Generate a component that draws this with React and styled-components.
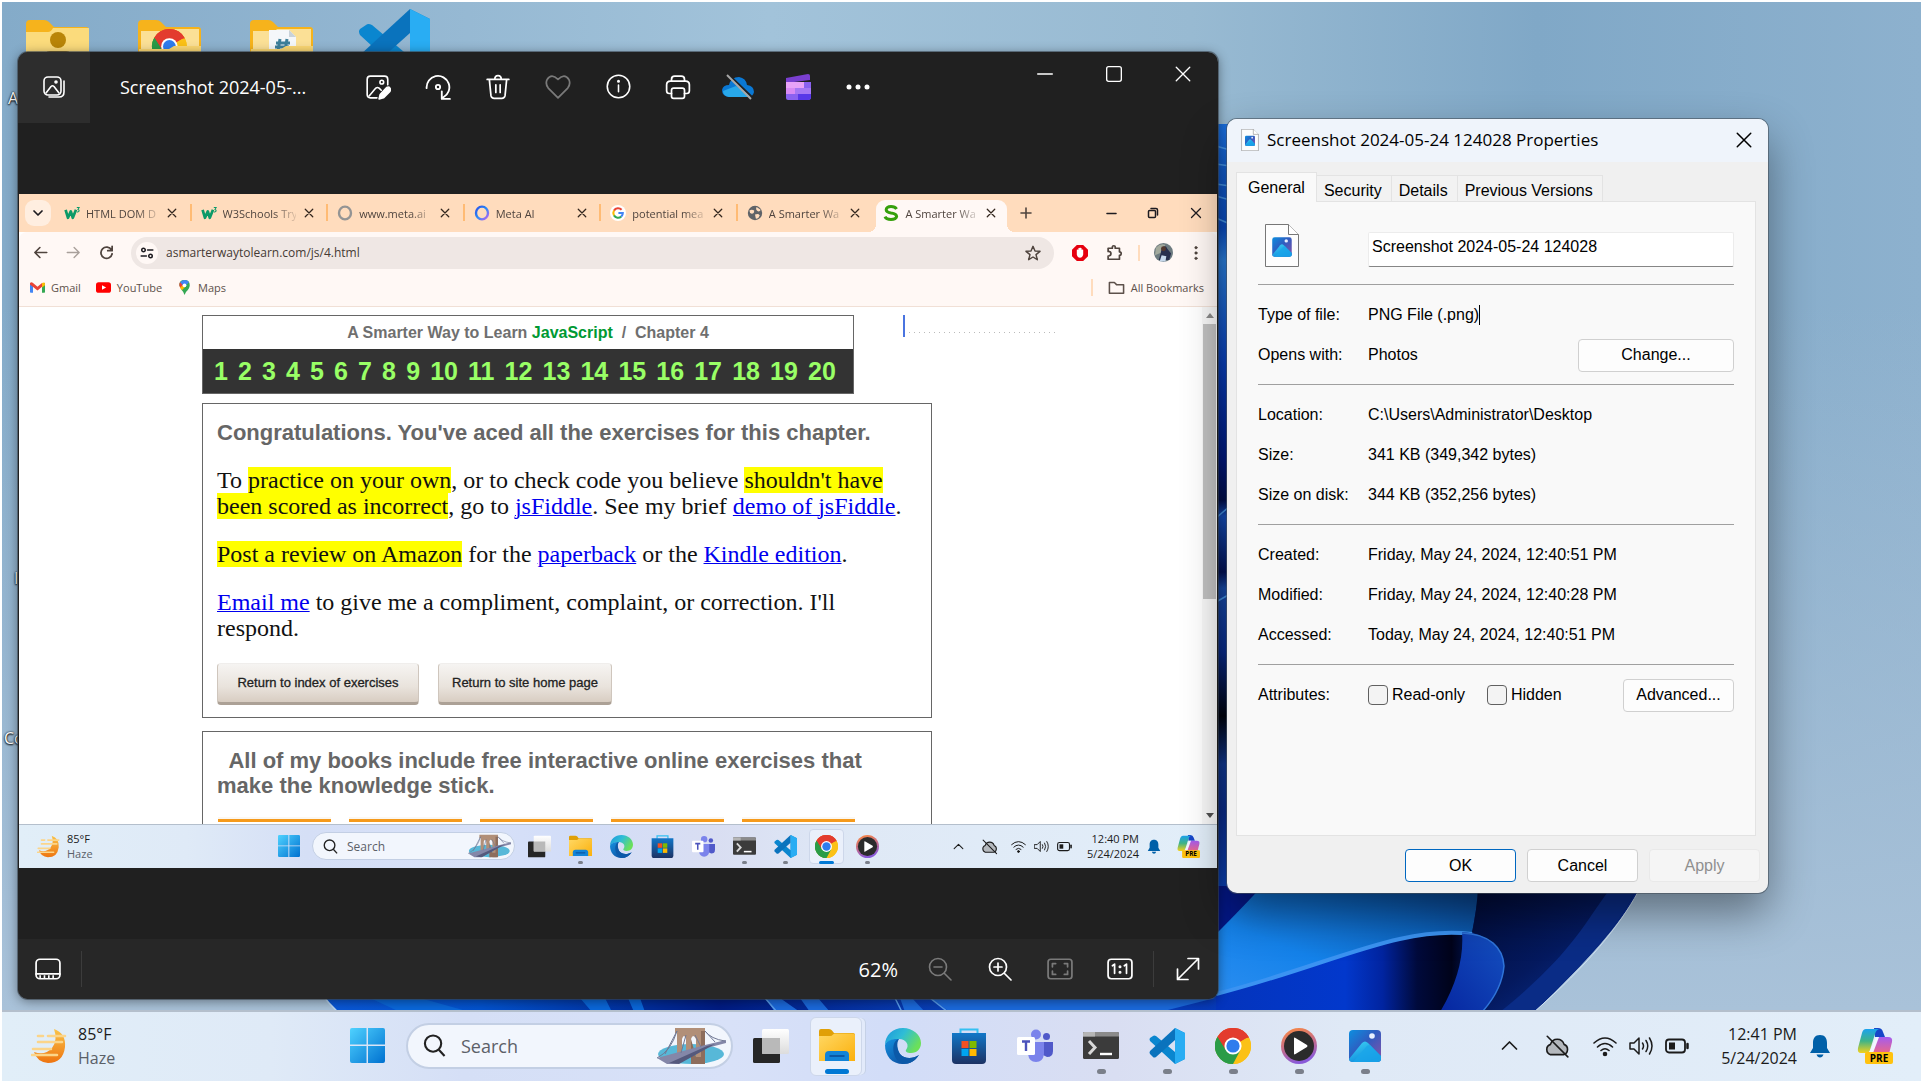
import React from "react";
import styled, { createGlobalStyle, css } from "styled-components";

const ui = '"Open Sans", "Noto Sans", sans-serif';
const arial = '"Liberation Sans", Arial, sans-serif';
const serif = '"Liberation Serif", Georgia, serif';

const GlobalStyle = createGlobalStyle`
  * { box-sizing: border-box; }
  body { margin: 0; background: #fff; font-family: ${ui}; }
  button, input { font: inherit; color: inherit; margin: 0; }
  button { cursor: pointer; }
`;

/* ---------- desktop ---------- */

const Desktop = styled.div`
  display: flex;
  flex-direction: column;
  height: 100vh;
  padding: 2px;
  overflow: hidden;
`;

const Workspace = styled.main`
  position: relative;
  flex: 1;
  min-height: 0;
  overflow: hidden;
  background: #93b4cd;
`;

const WallpaperSvg = styled.svg`
  position: absolute;
  inset: 0;
  width: 100%;
  height: 100%;
`;

const DesktopItem = styled.div`
  position: absolute;
  left: ${(p) => p.$x}px;
  top: ${(p) => p.$y}px;
  font-size: 16px;
  line-height: 20px;
  color: #fff;
  text-shadow: 0 1px 2px #000, 0 0 2px #000;
  svg { display: block; }
`;

/* ---------- shared parts ---------- */

const IconButton = styled.button`
  display: flex;
  align-items: center;
  justify-content: center;
  width: ${(p) => p.$w}px;
  height: ${(p) => (p.$h ? p.$h + "px" : "100%")};
  padding: 0;
  flex: none;
  border: 0;
  background: none;
  color: ${(p) => p.$color || "inherit"};
`;

const Line = ({ size = 24, w = 1.3, children, h }) => (
  <svg width={size} height={h || size} viewBox="0 0 24 24" fill="none" stroke="currentColor"
    strokeWidth={w} strokeLinecap="round" strokeLinejoin="round">{children}</svg>
);

/* ---------- photo viewer ---------- */

const PhotosWindow = styled.section`
  position: absolute;
  left: 16px;
  top: 50px;
  width: 1200px;
  display: flex;
  flex-direction: column;
  border-radius: 10px;
  overflow: hidden;
  background: #202020;
  color: #fff;
`;

const PhotosShadow = styled.div`
  position: absolute;
  left: 16px;
  top: 50px;
  width: 1200px;
  height: 947px;
  border-radius: 10px;
  box-shadow: 0 0 0 1px rgba(60, 70, 80, 0.6), 0 2px 12px rgba(0, 0, 0, 0.45);
`;

const PhotosBar = styled.header`
  display: flex;
  height: 71px;
`;

const GalleryCell = styled.div`
  display: flex;
  width: 72px;
  padding-bottom: 2px;
  background: #2d2d2d;
`;

const PhotosTitle = styled.h1`
  margin: 0;
  width: 258px;
  padding-left: 30px;
  font-size: 18px;
  font-weight: 400;
  line-height: 70px;
`;

const Commands = styled.div`
  display: flex;
  padding-bottom: 2px;
`;

const WindowControls = styled.div`
  display: flex;
  margin-left: auto;
  padding-right: 1px;
`;

const Stage = styled.div`
  padding: 71px 1px;
`;

const PhotosFooter = styled.footer`
  display: flex;
  align-items: center;
  height: 60px;
  background: #272727;
  font-size: 20px;
`;

const FooterRule = styled.span`
  width: 1px;
  height: 36px;
  margin: 0 4px 0 3px;
  background: #3c3c3c;
`;

const ZoomLevel = styled.output`
  margin-left: auto;
  padding-right: 12px;
`;

/* ---------- browser ---------- */

const Browser = styled.article`
  display: flex;
  flex-direction: column;
  background: #fff;
  color: #4f443e;
`;

const TabStrip = styled.div`
  display: flex;
  align-items: center;
  height: 38px;
  padding-left: 6px;
  background: #ffdcbd;
`;

const TabSearch = styled(IconButton)`
  border-radius: 9px;
  background: #ffeee0;
  color: #1d1b20;
  margin-right: 4px;
`;

const TabList = styled.div`
  display: grid;
  grid-template-columns: repeat(7, 1fr);
  flex: 1;
  height: 100%;
  padding-top: 6px;
`;

const Tab = styled.div`
  position: relative;
  display: flex;
  align-items: center;
  padding: 0 0 6px 9px;
  font-size: 11px;
  height: 32px;
  ${(p) => p.$rule && css`
    background: linear-gradient(#ffbb74, #ffbb74) right 0 top 4px / 2px 17px no-repeat;
  `}
  ${(p) => p.$active && css`
    margin: 0 4px 0 2px;
    padding-left: 7px;
    background: #fff8f5;
    border-radius: 9px 9px 0 0;
    &::before, &::after {
      content: "";
      position: absolute;
      bottom: 0;
      width: 8px;
      height: 8px;
    }
    &::before { left: -8px; background: radial-gradient(circle at 0 0, transparent 8px, #fff8f5 8px); }
    &::after { right: -8px; background: radial-gradient(circle at 100% 0, transparent 8px, #fff8f5 8px); }
  `}
`;

const TabLabel = styled.span`
  width: 73px;
  margin-left: 6px;
  white-space: nowrap;
  mask-image: linear-gradient(90deg, #000 70%, rgba(0, 0, 0, 0.15) 100%);
`;

const ChromeControls = styled.div`
  display: flex;
  height: 100%;
  margin-left: 49px;
`;

const Toolbar = styled.div`
  display: flex;
  align-items: center;
  height: 41px;
  padding: 0 6px 0 4px;
  background: #fff8f5;
  border-radius: 8px 8px 0 0;
`;

const Omnibox = styled.div`
  display: flex;
  align-items: center;
  flex: 1;
  height: 32px;
  margin: 0 8px;
  padding-left: 5px;
  border-radius: 16px;
  background: #efe7e4;
`;

const SiteInfo = styled(IconButton)`
  border-radius: 50%;
  background: #fff8f5;
  color: #1d1b20;
`;

const UrlInput = styled.input`
  flex: 1;
  padding: 0 0 0 8px;
  border: 0;
  background: none;
  font-size: 12px;
  outline: 0;
  color: #453a34;
`;

const BarRule = styled.span`
  width: 2px;
  height: 16px;
  margin: 0 6px;
  background: #ffdcbd;
`;

const Bookmarks = styled.nav`
  display: flex;
  align-items: center;
  height: 34px;
  padding: 0 13px 4px 11px;
  gap: 15px;
  font-size: 11px;
  background: #fff8f5;
  border-bottom: 1px solid #f1e0d6;
`;

const Bookmark = styled.a`
  display: flex;
  align-items: center;
  gap: 6px;
  color: #5d514b;
  text-decoration: none;
`;

const BookmarkRule = styled.span`
  width: 2px;
  height: 17px;
  margin-left: auto;
  background: #ffdcbd;
`;

const PageArea = styled.div`
  display: flex;
  height: 517px;
  overflow: hidden;
`;

const PageContent = styled.div`
  flex: 1;
  padding: 8px 0 0 183px;
  color: #111;
`;

const ScrollTrack = styled.div`
  display: flex;
  flex-direction: column;
  align-items: center;
  width: 15px;
  padding: 5px 1px;
  background: #f8f8f8;
`;

const ScrollThumb = styled.div`
  width: 100%;
  height: 275px;
  margin: 4px 0 auto;
  background: #c1c1c1;
`;

const ChapterRow = styled.div`
  display: flex;
  gap: 49px;
`;

const ChapterBox = styled.header`
  width: 652px;
  border: 1px solid #666;
`;

const ChapterTitle = styled.h2`
  margin: 0;
  font: 700 16px/33px ${arial};
  text-align: center;
  white-space: pre;
  color: #6f6f6f;
  em { font-style: normal; color: #009933; }
`;

const Numbers = styled.nav`
  display: flex;
  justify-content: space-between;
  padding: 0 17px 0 11px;
  background: #333;
  font: 700 25px/44px ${arial};
  a { color: #99ff66; text-decoration: none; }
`;

const StrayField = styled.div`
  width: 156px;
  height: 22px;
  border-left: 2px solid #4a74e0;
  background: linear-gradient(90deg, #bbb 25%, transparent 25%) 4px 17px / 5px 1px repeat-x;
`;

const Card = styled.section`
  width: 730px;
  margin-top: ${(p) => p.$gap}px;
  padding: 16px 14px 12px;
  border: 1px solid #666;
  font: 24px/26px ${serif};
`;

const CardTitle = styled.h3`
  margin: 0;
  font: 700 22px/25px ${arial};
  color: #666;
  white-space: pre-line;
`;

const Paragraph = styled.p`
  margin: 22px 0 0;
  white-space: pre;
  mark { background: #ff0; color: inherit; }
  a { color: #0000ee; text-decoration-thickness: 1px; }
`;

const ReturnRow = styled.div`
  display: flex;
  gap: 19px;
  margin-top: 22px;
`;

const ReturnButton = styled.button`
  width: ${(p) => p.$w}px;
  height: 42px;
  padding: 0;
  border: 1px solid #cfc6bd;
  border-top-color: #f0eeec;
  border-bottom: 3px solid #aca196;
  border-radius: 4px;
  background: linear-gradient(#f6f4f2, #e9e3dc 60%, #d8cdc2);
  font: 13px/18px ${arial};
  color: #222;
  -webkit-text-stroke: 0.3px #222;
`;

const Covers = styled.div`
  display: grid;
  grid-template-columns: repeat(5, 113px);
  gap: 18px;
  margin: 19px 0 0 1px;
  padding-bottom: 20px;
`;

const Cover = styled.div`
  height: 40px;
  background: linear-gradient(#fbf7f1 2px, #f59a1c 2px 5px, #fff 5px);
`;

/* ---------- task bar ---------- */

const Bar = styled.footer`
  display: flex;
  align-items: center;
  position: relative;
  flex: none;
  height: ${(p) => (p.$small ? 44 : 71)}px;
  padding-right: ${(p) => (p.$small ? 9 : 14)}px;
  background: linear-gradient(90deg, #e1eef8 0%, #dfeaf7 14%, #d5dff6 24%, #d8e1f8 38%, #d2ddf8 46%, #d9def2 58%, #dfe9f6 70%, #e2eef9 100%);
  box-shadow: inset 0 ${(p) => (p.$small ? 1 : 2)}px #b4bfcc;
  color: #1b1b1b;
`;

const Weather = styled.div`
  display: flex;
  align-items: center;
  gap: ${(p) => (p.$small ? 7 : 11)}px;
  width: ${(p) => (p.$small ? 247 : 329)}px;
  padding-left: ${(p) => (p.$small ? 18 : 29)}px;
  font-size: ${(p) => (p.$small ? 11 : 16)}px;
  line-height: ${(p) => (p.$small ? 15 : 24)}px;
  span { display: block; }
  span + span { color: #5a6068; }
`;

const Search = styled.label`
  display: flex;
  align-items: center;
  width: ${(p) => (p.$small ? 203 : 327)}px;
  height: ${(p) => (p.$small ? 28 : 46)}px;
  margin: 0 ${(p) => (p.$small ? "4px 0 0" : "5px 0 3px")};
  padding: 0 ${(p) => (p.$small ? "3px 0 10px" : "5px 0 15px")};
  border: ${(p) => (p.$small ? 1 : 2)}px solid #c3cfe4;
  border-radius: 24px;
  background: #f2f6fd;
  font-size: ${(p) => (p.$small ? 12 : 18)}px;
  svg { flex: none; }
`;

const SearchInput = styled.input`
  flex: 1;
  min-width: 0;
  padding: 0 0 0 ${(p) => (p.$small ? 9 : 15)}px;
  border: 0;
  outline: 0;
  background: none;
  &::placeholder { color: #5c6068; opacity: 1; }
`;

const AppButton = styled.button`
  position: relative;
  display: flex;
  align-items: center;
  justify-content: center;
  flex: none;
  width: ${(p) => (p.$small ? 41 : 66)}px;
  height: 100%;
  padding: 0;
  border: 0;
  background: none;
  &::before {
    content: "";
    position: absolute;
    inset: ${(p) => (p.$small ? "5px 3px 4px" : "7px 8px 5px 6px")};
    display: ${(p) => (p.$active ? "block" : "none")};
    border: 1px solid #cdd7ea;
    border-radius: ${(p) => (p.$small ? 4 : 6)}px;
    background: #eaf0fb;
    box-shadow: ${(p) => (p.$small ? "none" : "4px 0 0 -1px #e2eafa, 5px 0 0 -1px #c5d1e6")};
  }
  &::after {
    content: "";
    position: absolute;
    bottom: ${(p) => (p.$small ? 4 : 7)}px;
    display: ${(p) => (p.$active || p.$open ? "block" : "none")};
    width: ${(p) => (p.$active ? (p.$small ? 15 : 24) : p.$small ? 5 : 9)}px;
    height: ${(p) => (p.$small ? 3 : 5)}px;
    border-radius: 3px;
    background: ${(p) => (p.$active ? "#0078d4" : "#7a7f8a")};
  }
  svg { position: relative; }
`;

const Tray = styled.div`
  display: flex;
  align-items: center;
  height: 100%;
  margin-left: auto;
`;

const TrayOverflow = styled.div`
  display: flex;
  height: 100%;
  margin-right: ${(p) => (p.$small ? 2 : 6)}px;
`;

const Clock = styled.time`
  width: ${(p) => (p.$small ? 63 : 102)}px;
  font-size: ${(p) => (p.$small ? 11 : 16)}px;
  line-height: ${(p) => (p.$small ? 15 : 24)}px;
  text-align: right;
  white-space: nowrap;
  span { display: block; }
`;

/* ---------- properties dialog ---------- */

const Dialog = styled.section`
  position: absolute;
  left: 1225px;
  top: 117px;
  width: 541px;
  height: 774px;
  display: flex;
  flex-direction: column;
  border-radius: 10px;
  background: #f0f0f0;
  color: #000;
  font: 16px/20px ${arial};
  overflow: hidden;
`;

const DialogShadow = styled.div`
  position: absolute;
  left: 1225px;
  top: 117px;
  width: 541px;
  height: 774px;
  border-radius: 10px;
  box-shadow: 0 0 0 1px rgba(70, 80, 90, 0.6), 0 20px 44px rgba(0, 0, 0, 0.42);
`;

const DialogBar = styled.header`
  display: flex;
  align-items: center;
  gap: 8px;
  height: 43px;
  padding: 0 0 2px 14px;
  background: #eff4fb;
  font: 17px/24px ${ui};
`;

const DialogTitle = styled.h2`
  flex: 1;
  margin: 0;
  font: inherit;
`;

const DialogTabs = styled.div`
  display: flex;
  align-items: flex-end;
  padding: 10px 9px 0;
`;

const DialogTab = styled.button`
  height: ${(p) => (p.$active ? 30 : 26)}px;
  margin-bottom: ${(p) => (p.$active ? -1 : 0)}px;
  padding: ${(p) => (p.$active ? "0 11px" : "5px 9px 0 7px")};
  border: 1px solid #e3e3e3;
  border-left-width: ${(p) => (p.$active ? 1 : 0)}px;
  border-bottom: 0;
  background: ${(p) => (p.$active ? "#f9f9f9" : "#f2f2f2")};
  z-index: ${(p) => (p.$active ? 1 : 0)};
`;

const Panel = styled.div`
  flex: 1;
  margin: 0 12px 0 9px;
  padding: 0 21px;
  border: 1px solid #e3e3e3;
  background: #f9f9f9;
`;

const FileHead = styled.div`
  display: flex;
  padding: 22px 0 17px;
  svg { margin: 0 69px 0 7px; flex: none; }
`;

const NameInput = styled.input`
  flex: 1;
  min-width: 0;
  height: 35px;
  margin-top: 8px;
  padding: 0 3px 5px;
  border: 1px solid #ececec;
  border-bottom-color: #868686;
  border-radius: 2px;
  background: #fff;
`;

const Group = styled.dl`
  margin: 0;
  padding: 10px 0 9px;
  border-top: 1px solid #a0a0a0;
`;

const Row = styled.div`
  display: flex;
  align-items: center;
  height: 40px;
  dt { width: 110px; flex: none; }
  dd { display: flex; align-items: center; flex: 1; margin: 0; }
`;

const Caret = styled.i`
  width: 1px;
  height: 20px;
  background: #000;
`;

const PushButton = styled.button`
  width: ${(p) => p.$w || 111}px;
  height: 33px;
  margin-left: ${(p) => (p.$end ? "auto" : "0")};
  padding: 0;
  border: 1px solid ${(p) => (p.$primary ? "#0067c0" : "#d0d0d0")};
  border-radius: 4px;
  background: #fdfdfd;
  &:disabled { border-color: #e9e9e9; background: #f5f5f5; color: #8f8f8f; }
`;

const Check = styled.label`
  display: flex;
  align-items: center;
  gap: 4px;
  margin-right: 22px;
  input {
    appearance: none;
    width: 20px;
    height: 20px;
    border: 1px solid #606060;
    border-radius: 4px;
    background: #f3f3f3;
  }
`;

const DialogFooter = styled.footer`
  display: flex;
  justify-content: flex-end;
  gap: 11px;
  padding: 13px 8px 11px;
`;

/* ---------- drawings ---------- */

function Wallpaper() {
  return (
    <WallpaperSvg viewBox="2 2 1919 1008" preserveAspectRatio="xMidYMid slice" aria-hidden="true">
      <defs>
        <linearGradient id="sky" x1="0" x2="1">
          <stop offset="0" stopColor="#84abc9" /><stop offset=".15" stopColor="#8fb3cf" />
          <stop offset=".4" stopColor="#a2c3da" /><stop offset=".62" stopColor="#98bad2" />
          <stop offset=".8" stopColor="#80a8c7" /><stop offset="1" stopColor="#8db1ce" />
        </linearGradient>
        <linearGradient id="skyLow" x1="0" x2="0" y1="0" y2="1">
          <stop offset=".3" stopColor="#a9c0d6" stopOpacity="0" /><stop offset="1" stopColor="#a9c2d9" />
        </linearGradient>
        <linearGradient id="base" x1="0" x2="1">
          <stop offset="0" stopColor="#0a58d8" /><stop offset=".12" stopColor="#0353cf" />
          <stop offset=".3" stopColor="#001c84" /><stop offset=".5" stopColor="#0a47c4" />
          <stop offset=".7" stopColor="#0638b8" /><stop offset=".82" stopColor="#02124e" /><stop offset="1" stopColor="#0a2f96" />
        </linearGradient>
        <linearGradient id="gap" x1="0" x2="0" y1="0" y2="1">
          <stop offset="0" stopColor="#1a70e0" /><stop offset=".13" stopColor="#0b50cc" /><stop offset=".17" stopColor="#2d86ea" />
          <stop offset=".3" stopColor="#0a44c8" /><stop offset=".42" stopColor="#001a86" /><stop offset=".47" stopColor="#020f50" />
          <stop offset=".49" stopColor="#1753c4" /><stop offset=".56" stopColor="#04145c" /><stop offset=".58" stopColor="#1a50b4" />
          <stop offset=".66" stopColor="#0a2e94" /><stop offset=".74" stopColor="#01040f" /><stop offset=".8" stopColor="#123c9a" />
          <stop offset=".86" stopColor="#0c2f94" /><stop offset="1" stopColor="#0c4fd0" />
        </linearGradient>
        <linearGradient id="ribbon" x1="0" y1="1" x2="1" y2="0">
          <stop offset="0" stopColor="#2a8df0" /><stop offset=".35" stopColor="#1482ea" /><stop offset=".7" stopColor="#0c60b8" /><stop offset="1" stopColor="#0a3f86" />
        </linearGradient>
        <linearGradient id="under" x1="0" x2="1">
          <stop offset="0" stopColor="#0434bc" /><stop offset=".45" stopColor="#0238cc" /><stop offset=".58" stopColor="#0124a0" /><stop offset=".7" stopColor="#000a3c" /><stop offset=".82" stopColor="#00031a" /><stop offset="1" stopColor="#0632b0" />
        </linearGradient>
        <linearGradient id="right" x1="0" x2="1" y1="0" y2="1">
          <stop offset="0" stopColor="#010a34" /><stop offset=".5" stopColor="#04195e" /><stop offset="1" stopColor="#0b3aa6" />
        </linearGradient>
        <linearGradient id="fold" x1="0" x2="1" y1="1" y2="0"><stop offset="0" stopColor="#0626a0" /><stop offset="1" stopColor="#1450c0" /></linearGradient>
      </defs>
      <rect x="2" y="2" width="1919" height="1008" fill="url(#sky)" />
      <rect x="2" y="2" width="1919" height="1008" fill="url(#skyLow)" />
      <path d="M322 994 Q328 1003 338 1012 H1534 C1588 960 1620 925 1638 892 C1680 700 1600 200 1228 132 L1214 122 L900 160 Z" fill="url(#base)" />
      <path d="M370 998 L400 1012 H470 L420 998Z M580 998 L592 1012 H612 L605 998Z M628 998 L634 1012 H645 L640 998Z" fill="#0a68dc" />
      <path d="M765 998 L775 1012 H800 L780 998Z M800 998 L810 1012 H830 L818 998Z M900 998 L905 1012 H925 L912 998Z M930 998 L950 1012 H1160 L1215 998Z" fill="#1b6ade" />
      <path d="M765 998 L777 1012 M895 998 L902 1012 M930 998 L948 1012" stroke="#5aa0f0" strokeWidth="1.5" />
      <rect x="1216" y="124" width="14" height="800" fill="url(#gap)" />
      <path d="M1216 146 L1230 150 M1216 164 L1230 166 M1216 184 L1230 186 M1216 196 L1230 200 M1216 218 L1230 224 M1216 518 L1230 506 M1216 602 L1230 594" stroke="#4a9df2" strokeWidth="1.5" />
      <path d="M1216 930 Q1245 905 1262 886 H1480 Q1475 915 1472 934 C1400 925 1330 965 1216 994Z" fill="url(#ribbon)" />
      <path d="M1216 934 Q1245 905 1262 886 H1216Z" fill="#04188a" />
      <path d="M1216 994 C1330 965 1400 925 1472 934 L1500 950 Q1512 975 1480 1012 H1216Z" fill="url(#under)" />
      <path d="M1216 994 C1330 965 1400 925 1472 934" fill="none" stroke="#3b93f2" strokeWidth="4" />
      <path d="M1478 886 H1638 C1620 925 1588 960 1534 1012 H1484 C1512 960 1506 945 1472 932 Q1477 910 1478 886Z" fill="url(#right)" />
      <path d="M1612 886 H1638 C1620 925 1588 960 1534 1012 H1500 C1570 955 1580 930 1612 886Z" fill="#0a2c86" />
      <path d="M1462 932 C1490 934 1503 948 1504 966 Q1502 990 1482 1012 H1440 Q1465 970 1462 932Z" fill="url(#fold)" />
      <path d="M1462 933 C1490 934 1503 948 1504 966 Q1502 990 1482 1012" fill="none" stroke="#2f74d8" strokeWidth="1.5" />
      <path d="M1638 892 C1620 925 1588 965 1534 1012" fill="none" stroke="#cfe2f4" strokeWidth="1" />
      <path d="M322 994 Q328 1003 338 1012" fill="none" stroke="#bcd8f2" strokeWidth="1.5" />
    </WallpaperSvg>
  );
}

function DesktopFolder({ kind }) {
  return (
    <svg width="64" height="48" viewBox="0 0 64 48">
      <path d="M0 5 a4 4 0 0 1 4-4 h14 q3 0 5 2 l5 5 h32 a3 3 0 0 1 3 3 v40 H0z" fill="#f6b31c" />
      {kind === "user" ? (
        <>
          <path d="M0 13 h22 q3 0 5-4 h36 v42 H0z" fill="#fbdb7c" />
          <ellipse cx="32" cy="21" rx="8" ry="8" fill="#b98508" /><path d="M18 40 q0-8 6-8 h16 q6 0 6 8z" fill="#9a6a06" />
        </>
      ) : (
        <>
          <path d="M3 12 h20 q3 0 4-2 h34 v38 H3z" fill="#fbe096" />
          {kind === "chrome" ? (
            <g transform="translate(14 10) scale(1.45)"><ChromeMark /></g>
          ) : (
            <g><path d="M19 11 h20 l7 7 v26 H19z" fill="#f4f7fa" /><path d="M39 11 v7 h7z" fill="#c8d2da" />
              <path d="M30 20 l-2 12 M37 20 l-2 12 M26 24 h14 M25 28 h14" stroke="#3d7f9a" strokeWidth="3" /></g>
          )}
          <path d="M1 30 h30 l5-3 h27 v20 H1z" fill="#fbd773" />
        </>
      )}
    </svg>
  );
}

function ChromeMark() {
  return (
    <g>
      <circle cx="12" cy="12" r="12" fill="#fbc116" />
      <path d="M12 12 L1.6 6 A12 12 0 0 1 22.4 6z" fill="#e33b2e" />
      <path d="M12 12 L12 24 A12 12 0 0 1 1.6 6z" fill="#2a9c47" />
      <path d="M12 12 L22.4 6 A12 12 0 0 1 12 24z" fill="#fbc116" />
      <path d="M12 6.5 H22.7 A12 12 0 0 0 1.6 6 L7.2 15z" fill="#e33b2e" />
      <path d="M7 14.5 L1.6 6 A12 12 0 0 0 12 24 L16.8 15z" fill="#2a9c47" />
      <circle cx="12" cy="12" r="5.7" fill="#fff" />
      <circle cx="12" cy="12" r="4.4" fill="#2f7ced" />
    </g>
  );
}

const Art = ({ s, children, box = "0 0 36 36" }) => (
  <svg width={s} height={s} viewBox={box} aria-hidden="true">{children}</svg>
);

const VsMark = () => (
  <>
    <path d="M26 0 L36 5 V31 L26 36 L1 13 Q0 11 1 10 L4 8 Q5 7 7 8 L26 24z" fill="#0a86cf" />
    <path d="M26 0 L1 23 Q0 25 1 26 L4 29 Q5 30 7 29 L26 12z" fill="#0a73bd" />
    <path d="M26 0 L36 5 V31 L26 36z" fill="#29adf3" />
  </>
);

const art = {
  start: (
    <><defs><linearGradient id="wl" x2="1" y2="1"><stop stopColor="#4fd2ff" /><stop offset="1" stopColor="#0071d0" /></linearGradient></defs>
      <path d="M2 0 H17 V17 H0 V2 Q0 0 2 0z M18.500 0 H34 Q36 0 36 2 V17 H18.500z M0 18.500 H17 V36 H2 Q0 36 0 34z M18.500 18.500 H36 V34 Q36 36 34 36 H18.500z" fill="url(#wl)" /></>
  ),
  task: (
    <><defs><linearGradient id="tw" y2="1" x2="0"><stop stopColor="#fff" /><stop offset="1" stopColor="#dcdcdc" /></linearGradient></defs>
      <rect x="0" y="10" width="27" height="25" rx="1.500" fill="#262626" /><rect x="9" y="1" width="27" height="25" rx="1.500" fill="url(#tw)" />
      <path d="M9 10 H27 V26 H10 Q9 26 9 25z" fill="#b9b9b9" /></>
  ),
  folder: (
    <><defs><linearGradient id="fd" x2="1" y2="1"><stop stopColor="#ffd864" /><stop offset="1" stopColor="#fbb00c" /></linearGradient></defs>
      <path d="M0 3 Q0 1 2 1 H10 Q12 1 13 2.500 L15 5 H34 Q36 5 36 7 V12 H0z" fill="#e0a008" />
      <path d="M0 8 H11 Q13 8 14 6.500 L15.500 5.500 H34 Q36 5.500 36 7.500 V33 H0z" fill="url(#fd)" />
      <path d="M6 33 V27 Q6 23 10 23 H26 Q30 23 30 27 V33z" fill="#1284d8" /><path d="M10.500 28 H25.500" stroke="#0a4a94" strokeWidth="1.500" /></>
  ),
  edge: (
    <><defs><linearGradient id="eg" x1="0" y1="0" x2="1" y2=".5"><stop stopColor="#1c96dc" /><stop offset=".5" stopColor="#2fbdd6" /><stop offset="1" stopColor="#6be05a" /></linearGradient>
      <linearGradient id="eb" x2="1" y2="1"><stop stopColor="#1490df" /><stop offset="1" stopColor="#0b3f92" /></linearGradient></defs>
      <path d="M0 17 C0 7 8 0 18 0 C28 0 36 7 36 15 C36 21 32 25 26 25 C22 25 20 23.500 21 22 C25 17 21 11 14 11 C7 11 1 14 0 17z" fill="url(#eg)" />
      <path d="M0 17 C2 12 8 10.500 14 11 C10 13 12 22 15 26 C19 31 28 31 34 27 C30 33 25 36 18 36 C7 36 0 28 0 17z" fill="url(#eb)" />
      <path d="M14 11 C5 13 7 33 18 36 C25 36 30 33 34 27 C28 31 19 31 15 26 C12.500 22 11 15 14 11z" fill="#0c59a8" /></>
  ),
  store: (
    <><defs><linearGradient id="st" y2="1" x2="0"><stop stopColor="#1277c8" /><stop offset="1" stopColor="#1c3264" /></linearGradient></defs>
      <path d="M9.500 6 V1.500 H26.500 V6" fill="none" stroke="#35c0f2" strokeWidth="2" /><path d="M1 5 H35 V32 Q35 36 31 36 H5 Q1 36 1 32z" fill="url(#st)" />
      <path d="M10.500 13 h7 v7 h-7z" fill="#f25022" /><path d="M18.500 13 h7 v7 h-7z" fill="#7fba00" /><path d="M10.500 21 h7 v7 h-7z" fill="#00a4ef" /><path d="M18.500 21 h7 v7 h-7z" fill="#ffb900" /></>
  ),
  teams: (
    <><circle cx="19" cy="6.500" r="5" fill="#7b83eb" /><circle cx="29.500" cy="8.500" r="3.500" fill="#5059c9" />
      <path d="M26 14 H36 V23 Q36 29 30 29 L26 27z" fill="#5059c9" /><path d="M11 14 H27 V26 Q26 34 19 34 Q12 34 11 26z" fill="#7b83eb" />
      <rect x="0" y="9" width="18" height="18" rx="1.500" fill="#fff" /><path d="M5 13.500 H13 M9 13.500 V23" stroke="#4b53bc" strokeWidth="2.400" /></>
  ),
  terminal: (
    <><rect y="4" width="36" height="27" rx="1.500" fill="#3b3b3b" /><path d="M0 8.500 V5.500 Q0 4 1.500 4 H34.500 Q36 4 36 5.500 V8.500z" fill="#8b8b8b" /><path d="M0 8.500 V5.500 Q0 4 1.500 4 H12 V8.500z" fill="#b5b5b5" />
      <path d="M6 13 L12 19.500 L6 26" fill="none" stroke="#d8d8d8" strokeWidth="3" /><path d="M17 26 H29" stroke="#fff" strokeWidth="2.400" /></>
  ),
  vscode: <VsMark />,
  chrome: <g transform="scale(1.500)"><ChromeMark /></g>,
  player: (
    <><defs><linearGradient id="pl" y2="1" x2=".3"><stop stopColor="#ff8a3a" /><stop offset=".6" stopColor="#c06a90" /><stop offset="1" stopColor="#8a5ad8" /></linearGradient></defs>
      <circle cx="18" cy="18" r="18" fill="url(#pl)" /><circle cx="18" cy="18" r="15" fill="#2b2b2b" /><path d="M13 10.500 Q13 9 14.500 10 L26 17 Q27 18 26 19 L14.500 26 Q13 27 13 25.500z" fill="#fff" /></>
  ),
  photos: (
    <><defs><linearGradient id="ph" x2="1" y2="1"><stop stopColor="#0c8fe0" /><stop offset=".45" stopColor="#2f5cc0" /><stop offset="1" stopColor="#8a52a8" /></linearGradient>
      <linearGradient id="pm" x2=".6" y2="1"><stop stopColor="#3fd5f5" /><stop offset="1" stopColor="#0c86dc" /></linearGradient></defs>
      <rect x="2" y="2" width="32" height="32" rx="4" fill="url(#ph)" /><circle cx="25" cy="8" r="2.800" fill="#e8f0ff" />
      <path d="M2 31 L15 15 Q18 12 21 15 L34 28 V31 Q34 34 30 34 H6 Q2 34 2 31z" fill="url(#pm)" /><path d="M6 34 L19 19 Q20 17 23 17 L34 28 V31 Q34 34 30 34z" fill="#1aa6ea" opacity=".8" /></>
  ),
  haze: (
    <><defs><linearGradient id="hz" y2="1" x2="0"><stop stopColor="#f9c44a" /><stop offset="1" stopColor="#ee7410" /></linearGradient></defs>
      <path d="M23 1 Q35 5 34 19 Q32 35 17 35 Q6 34 3 24 Q14 28 21 20 Q27 12 23 1z" fill="url(#hz)" />
      <path d="M7 8 H12 M17 8 H34 M7 14 H31 M2 21 H20 M1 27 H26" stroke="#fbd58a" strokeWidth="2.600" strokeLinecap="round" /></>
  ),
  copilot: (
    <><defs><linearGradient id="ca" y2="1" x2="0"><stop stopColor="#1aa2ee" /><stop offset=".5" stopColor="#3fb488" /><stop offset="1" stopColor="#f5d21a" /></linearGradient>
      <linearGradient id="cb" y2="1" x2="0"><stop stopColor="#a45cf0" /><stop offset="1" stopColor="#fb6a70" /></linearGradient></defs>
      <path d="M17 0 H21 Q25 0 26 4 L28 9 H18z" fill="#1746c8" /><path d="M9 1 H22 Q19 2 18 6 L13 22 Q12 25 9 25 H4 Q0 25 1 20 L5 5 Q6 1 9 1z" fill="url(#ca)" />
      <path d="M22 9 H31 Q36 9 35 14 L32 26 Q31 29 27 29 H11 Q15 28 16 24 L19 12 Q20 9 22 9z" fill="url(#cb)" />
      <path d="M19 9 H22 L16 25 H12z" fill="#f2f6ff" /><rect x="8" y="24" width="28" height="12" rx="2" fill="#ffc20e" />
      <text x="22" y="33.500" textAnchor="middle" fontFamily="Open Sans" fontWeight="700" fontSize="10">PRE</text></>
  ),
};

function Bridge({ small }) {
  return (
    <svg width={small ? 44 : 71} height={small ? 24 : 38} viewBox="0 0 71 38" aria-hidden="true">
      <ellipse cx="36" cy="27" rx="33" ry="10" fill="#57b8d8" />
      <path d="M20 1 H50 V6 H48 V37 H41 V12 Q38 6 36 12 V30 H31 V12 Q29 6 27 12 V26 H22 V6 H20z" fill="#b18f78" />
      <path d="M36 12 V37 H50 V4 H46 V30 H41z" fill="#8d6d5c" />
      <path d="M2 31 L50 18 L71 13 V16 L52 21 L22 37 H12z" fill="#8487a8" /><path d="M14 36 L52 19 L60 17 L24 37z" fill="#55597c" />
      <path d="M22 4 Q16 24 2 31 M22 4 L10 27 M50 4 Q56 12 70 14 M50 4 L60 15 M31 8 L26 26 M40 8 L46 20" stroke="#707894" fill="none" strokeWidth="1" />
    </svg>
  );
}

const SearchGlass = ({ s }) => (
  <svg width={s} height={s} viewBox="0 0 24 24" fill="none" stroke="#222" strokeWidth="2.200"><circle cx="10.500" cy="10" r="8.500" /><path d="M16.500 16.500 L22.500 23" /></svg>
);

const FileIcon = ({ w, h }) => (
  <svg width={w} height={h} viewBox="0 0 34 43" aria-hidden="true">
    <path d="M.5 .5 H23.500 L33.500 10.500 V42.500 H.5z" fill="#fdfdfd" stroke="#777" /><path d="M23.500 .5 V10.500 H33.500" fill="#fff" stroke="#777" />
    <g transform="translate(6 12) scale(.61)">{art.photos}</g>
  </svg>
);

/* ---------- task bar ---------- */

const outerApps = [
  ["Task View", "task"], ["File Explorer", "folder", "active"], ["Edge", "edge"], ["Store", "store"], ["Teams", "teams"],
  ["Terminal", "terminal", "open"], ["VS Code", "vscode", "open"], ["Chrome", "chrome", "open"], ["Media Player", "player", "open"], ["Photos", "photos", "open"],
];
const innerApps = [
  ["Task View", "task"], ["File Explorer", "folder", "open"], ["Edge", "edge"], ["Store", "store"], ["Teams", "teams"],
  ["Terminal", "terminal", "open"], ["VS Code", "vscode", "open"], ["Chrome", "chrome", "active"], ["Media Player", "player", "open"],
];

function Taskbar({ small, apps, time }) {
  const icon = small ? 23 : 36;
  const tray = small ? 15 : 24;
  const cell = small ? 23 : 36;
  const wide = small ? 31 : 48;
  return (
    <Bar $small={small}>
      <Weather $small={small}>
        <Art s={icon}>{art.haze}</Art>
        <div><span>85°F</span><span>Haze</span></div>
      </Weather>
      <IconButton $w={small ? 46 : 72} aria-label="Start"><Art s={small ? 22 : 35}>{art.start}</Art></IconButton>
      <Search $small={small}>
        <SearchGlass s={small ? 15 : 23} />
        <SearchInput $small={small} placeholder="Search" aria-label="Search" />
        <Bridge small={small} />
      </Search>
      {apps.map(([name, key, state]) => (
        <AppButton key={name} aria-label={name} $small={small} $active={state === "active"} $open={state === "open"}>
          <Art s={icon}>{art[key]}</Art>
        </AppButton>
      ))}
      <Tray>
        <TrayOverflow $small={small}>
          <IconButton $w={wide} aria-label="Show hidden icons"><Line size={small ? 13 : 21} w={2}><path d="M4 16 L12 8 L20 16" /></Line></IconButton>
          <IconButton $w={wide} aria-label="OneDrive">
            <Line size={small ? 17 : 26} w={1.5}><path d="M6 20 A5 5 0 0 1 6 10.500 A6.500 6.500 0 0 1 18.500 10.500 A5 5 0 0 1 18 20z" fill="#b4b8bd" /><path d="M3 3 L22 22" /></Line>
          </IconButton>
        </TrayOverflow>
        <IconButton $w={cell} aria-label="Network">
          <Line size={tray} w={1.6}><path d="M1 9 Q12 -1 23 9 M4.500 13 Q12 6 19.500 13 M8 16.500 Q12 13 16 16.500" /><circle cx="12" cy="20" r="1.500" fill="currentColor" /></Line>
        </IconButton>
        <IconButton $w={cell} aria-label="Volume"><Line size={tray} w={1.5}><path d="M1 9 H5 L10 4 V20 L5 15 H1z M13.500 9 Q15.500 12 13.500 15 M17 6.500 Q20.500 12 17 17.500 M20.500 4 Q25.500 12 20.500 20" /></Line></IconButton>
        <IconButton $w={cell} aria-label="Battery"><Line size={tray} w={1.8}><rect x="1" y="5.500" width="19" height="13" rx="3" /><path d="M22.500 10 V14" strokeWidth="2.500" /><rect x="4" y="8.500" width="6" height="7" fill="currentColor" stroke="none" /></Line></IconButton>
        <Clock $small={small}><span>{time}</span><span>5/24/2024</span></Clock>
        <IconButton $w={small ? 29 : 46} $color="#0060a8" aria-label="Notifications">
          <svg width={small ? 14 : 22} height={small ? 15 : 24} viewBox="0 0 22 24" fill="currentColor"><path d="M11 1 C6 1 4 4.500 4 9 L4 14 L1 19 H21 L18 14 V9 C18 4.500 16 1 11 1z M7.500 20.500 H14.500 Q13.500 23.500 11 23.500 Q8.500 23.500 7.500 20.500z" /></svg>
        </IconButton>
        <IconButton $w={small ? 40 : 64} aria-label="Copilot"><Art s={icon}>{art.copilot}</Art></IconButton>
      </Tray>
    </Bar>
  );
}

/* ---------- browser ---------- */

const W3 = <><path d="M2 6 L5 16 L8.500 8 L11 16 L15 6" fill="none" stroke="#0c9a68" strokeWidth="3.400" strokeLinejoin="round" /><path d="M16 3 H19 L17.500 5.500 Q19.500 6 18.500 8 L16.500 9" fill="none" stroke="#0c9a68" strokeWidth="1.300" /></>;
const GIcon = <><circle cx="10" cy="10" r="10" fill="#fff" /><g fill="none" strokeWidth="2.600"><path d="M14.500 6 A6 6 0 0 0 5 7" stroke="#ea4335" /><path d="M5 7 A6 6 0 0 0 5 13" stroke="#fbbc05" /><path d="M5 13 A6 6 0 0 0 14 14.500" stroke="#34a853" /><path d="M14 14.500 A6 6 0 0 0 16 10 H10.500" stroke="#4285f4" /></g></>;

const tabs = [
  ["HTML DOM D", W3],
  ["W3Schools Try", W3],
  ["www.meta.ai", <ellipse cx="10" cy="10" rx="7.500" ry="8" fill="none" stroke="#949494" strokeWidth="3" />],
  ["Meta AI", <><defs><linearGradient id="mt" x2="1" y2="1"><stop stopColor="#2a50e8" /><stop offset=".5" stopColor="#2a8cf8" /><stop offset="1" stopColor="#c060f0" /></linearGradient></defs><ellipse cx="10" cy="10" rx="7.500" ry="8" fill="none" stroke="url(#mt)" strokeWidth="3" /></>],
  ["potential mea", GIcon],
  ["A Smarter Wa", <><circle cx="10" cy="10" r="9" fill="#5f6368" /><path d="M3 7 Q6 5 9 7 Q9 11 6 11 Q3 10 3 7z M12 2.500 Q10 6 14 8 Q17 8 17 6z M10 12 Q14 10 16 13 Q14 18 11 17z" fill="#ffdcbd" /></>],
  ["A Smarter Wa", <path d="M17 5 Q15 2 10 2 Q4 2 4 6 Q4 9 10 10 Q17 11 17 14.500 Q16 18 10 18 Q4 18 2.500 14.500" fill="none" stroke="#35a00c" strokeWidth="3.800" />],
];

const CloseX = ({ s = 10, w = 3 }) => <Line size={s} w={w}><path d="M3 3 L21 21 M21 3 L3 21" /></Line>;

function BrowserShot() {
  return (
    <Browser>
      <TabStrip>
        <TabSearch $w={26} $h={26} aria-label="Search tabs"><Line size={12} w={3.5}><path d="M4 8 L12 16 L20 8" /></Line></TabSearch>
        <TabList>
          {tabs.map(([label, icon], i) => (
            <Tab key={i} $active={i === 6} $rule={i < 5}>
              <Art s={16} box="0 0 20 20">{icon}</Art>
              <TabLabel>{label}</TabLabel>
              <IconButton $w={26} $color="#33261e" aria-label="Close tab"><CloseX /></IconButton>
            </Tab>
          ))}
        </TabList>
        <IconButton $w={30} aria-label="New tab"><Line size={12} w={3.2}><path d="M12 2 V22 M2 12 H22" /></Line></IconButton>
        <ChromeControls>
          <IconButton $w={42} $color="#1d1b20" aria-label="Minimize"><Line size={11} w={3}><path d="M2 12 H22" /></Line></IconButton>
          <IconButton $w={42} $color="#1d1b20" aria-label="Restore"><Line size={12} w={3}><rect x="3" y="7" width="14" height="14" rx="2" /><path d="M8 3 H18 Q21 3 21 6 V16" /></Line></IconButton>
          <IconButton $w={43} $color="#1d1b20" aria-label="Close"><CloseX s={12} w={2.6} /></IconButton>
        </ChromeControls>
      </TabStrip>
      <Toolbar>
        <IconButton $w={34} aria-label="Back"><Line size={15} w={2.6}><path d="M22 12 H4 M11 4 L3 12 L11 20" /></Line></IconButton>
        <IconButton $w={33} $color="#a9a09b" aria-label="Forward"><Line size={15} w={2.2}><path d="M2 12 H20 M13 4 L21 12 L13 20" /></Line></IconButton>
        <IconButton $w={33} aria-label="Reload"><Line size={15} w={2.8}><path d="M20 8 A9 9 0 1 0 21 14 M21 2 V9 H14" /></Line></IconButton>
        <Omnibox>
          <SiteInfo $w={22} $h={22} aria-label="Site information"><Line size={14} w={2.6}><circle cx="6" cy="7" r="3" /><path d="M13 7 H22 M2 17 H11" /><circle cx="18" cy="17" r="3" /></Line></SiteInfo>
          <UrlInput aria-label="Address" defaultValue="asmarterwaytolearn.com/js/4.html" />
          <IconButton $w={42} aria-label="Bookmark this page"><Line size={16} w={2.2}><path d="M12 2 L15 9 L22.500 9.500 L16.500 14.500 L18.500 22 L12 18 L5.500 22 L7.500 14.500 L1.500 9.500 L9 9z" /></Line></IconButton>
        </Omnibox>
        <IconButton $w={35} aria-label="Ad blocker">
          <Art s={16} box="0 0 20 20"><path d="M6 0 H14 L20 6 V14 L14 20 H6 L0 14 V6z" fill="#e6000f" /><path d="M6 10 V6 Q7 5 8 6 V4 Q9 3 10 4 V3.500 Q11 3 12 4 V6 Q13 5 14 6 V12 Q13 16 10 16 Q7 16 6 12z" fill="#fff" /></Art>
        </IconButton>
        <IconButton $w={35} aria-label="Extensions"><Line size={17} w={2.4}><path d="M3 6 H9 V4 Q9 2.500 11 2.500 Q13 2.500 13 4 V6 H19 V11 Q21.500 11 21.500 13.500 Q21.500 16 19 16 V21.500 H3 V17 Q7 17 7 13.500 Q7 10.500 3 10.500z" /></Line></IconButton>
        <BarRule />
        <IconButton $w={35} aria-label="Profile">
          <Art s={19} box="0 0 20 20"><circle cx="10" cy="10" r="10" fill="#6d7b80" /><path d="M2 5 Q7 0 12 2 L8 10 L1 13z" fill="#a3aa9d" /><path d="M8 6 Q12 1 14 6 L18 11 L16 18 H5 L7 11z" fill="#28304e" /><circle cx="10" cy="6" r="2.600" fill="#54382e" /><path d="M8 13 L13 14 L12 19.500 H6z" fill="#c7d9ec" /></Art>
        </IconButton>
        <IconButton $w={30} aria-label="Menu"><Line size={16} w={1}><g fill="currentColor"><circle cx="12" cy="4" r="1.800" /><circle cx="12" cy="12" r="1.800" /><circle cx="12" cy="20" r="1.800" /></g></Line></IconButton>
      </Toolbar>
      <Bookmarks>
        <Bookmark href="#gmail"><Art s={15} box="0 0 20 20"><path d="M0 4 H4 V17 H1 Q0 17 0 16z" fill="#4285f4" /><path d="M16 4 H20 V16 Q20 17 19 17 H16z" fill="#34a853" /><path d="M0 4 Q2 2 4 4 L10 9 L16 4 V9 L10 14 L0 6z" fill="#ea4335" /><path d="M16 4 Q20 2 20 5 V7 L16 10z" fill="#fbbc05" /></Art>Gmail</Bookmark>
        <Bookmark href="#youtube"><Art s={15} box="0 0 20 20"><rect y="3" width="20" height="14" rx="3.500" fill="#f00" /><path d="M8 7 L13.500 10 L8 13z" fill="#fff" /></Art>YouTube</Bookmark>
        <Bookmark href="#maps"><Art s={15} box="0 0 20 20"><path d="M10 0 Q17 0 17 7 Q17 11 12 16 L10 20 Q9 16 6 13 L3 7 Q3 0 10 0z" fill="#34a853" /><path d="M4 4 Q6 0 10 0 Q14 0 16 3 L8 11z" fill="#4285f4" /><path d="M4 3 L8 7 L4.500 11 Q2 6 4 3z" fill="#ea4335" /><path d="M4 10 L8 7 L12 8 L6.500 13.500z" fill="#fbbc05" /><circle cx="10" cy="7" r="2.500" fill="#fff" /></Art>Maps</Bookmark>
        <BookmarkRule />
        <Bookmark href="#all"><Line size={17} w={2.2}><path d="M2 5 H9 L12 8 H22 V20 H2z" /></Line>All Bookmarks</Bookmark>
      </Bookmarks>
      <PageArea>
        <PageContent>
          <ChapterRow>
            <ChapterBox>
              <ChapterTitle>A Smarter Way to Learn <em>JavaScript</em>{"  /  Chapter 4"}</ChapterTitle>
              <Numbers>{Array.from({ length: 20 }, (_, i) => <a key={i} href={"#" + (i + 1)}>{i + 1}</a>)}</Numbers>
            </ChapterBox>
            <StrayField />
          </ChapterRow>
          <Card $gap={9}>
            <CardTitle>Congratulations. You've aced all the exercises for this chapter.</CardTitle>
            <Paragraph>To <mark>practice on your own</mark>, or to check code you believe <mark>shouldn't have{"\n"}been scored as incorrect</mark>, go to <a href="#fiddle">jsFiddle</a>. See my brief <a href="#demo">demo of jsFiddle</a>.</Paragraph>
            <Paragraph><mark>Post a review on Amazon</mark> for the <a href="#paper">paperback</a> or the <a href="#kindle">Kindle edition</a>.</Paragraph>
            <Paragraph><a href="#email">Email me</a> to give me a compliment, complaint, or correction. I'll{"\n"}respond.</Paragraph>
            <ReturnRow>
              <ReturnButton $w={202}>Return to index of exercises</ReturnButton>
              <ReturnButton $w={174}>Return to site home page</ReturnButton>
            </ReturnRow>
          </Card>
          <Card $gap={13}>
            <CardTitle>{"\u00a0 All of my books include free interactive online exercises that\nmake the knowledge stick."}</CardTitle>
            <Covers>{[1, 2, 3, 4, 5].map((n) => <Cover key={n} />)}</Covers>
          </Card>
        </PageContent>
        <ScrollTrack>
          <svg width="8" height="8" viewBox="0 0 8 8"><path d="M0 6 L4 1 L8 6z" fill="#8a8a8a" /></svg>
          <ScrollThumb />
          <svg width="8" height="8" viewBox="0 0 8 8"><path d="M0 2 L4 7 L8 2z" fill="#505050" /></svg>
        </ScrollTrack>
      </PageArea>
      <Taskbar small apps={innerApps} time="12:40 PM" />
    </Browser>
  );
}

/* ---------- windows ---------- */

function Photos() {
  return (
    <>
      <PhotosShadow />
      <PhotosWindow>
        <PhotosBar>
          <GalleryCell><IconButton $w={72} aria-label="Gallery"><Line w={1.6}><rect x="2" y="2" width="17" height="18" rx="4" /><path d="M4 18 L9 11.500 Q10.500 10 12 11.500 L17 18 M22 6 V17 Q22 22 17 22 H7" /><circle cx="14" cy="7" r="1" /></Line></IconButton></GalleryCell>
          <PhotosTitle>Screenshot 2024-05-...</PhotosTitle>
          <Commands>
            <IconButton $w={60} aria-label="Edit image"><Line size={26} w={1.5}><path d="M11 22 H5 Q2 22 2 19 V5 Q2 2 5 2 H18 Q21 2 21 5 V10" /><path d="M4 20 L10 13 Q11.500 12 13 13 L15 15" /><circle cx="15.500" cy="7.500" r="1.700" /><path d="M13 23 L14 19 L20 12.500 Q22 11.500 23 13 Q24 14.500 23 16 L17 22z" fill="#fff" /></Line></IconButton>
            <IconButton $w={60} aria-label="Rotate"><Line size={26} w={1.7}><path d="M1.500 13 A10.500 10.500 0 1 1 17 21.500 M23 23 H15.500 V16" /><circle cx="12" cy="12" r="2" /></Line></IconButton>
            <IconButton $w={60} aria-label="Delete"><Line size={26} w={1.6}><path d="M2 5 H22 M9 5 Q9 1.500 12 1.500 Q15 1.500 15 5 M4 5 L5.500 20 Q6 22.500 8.500 22.500 H15.500 Q18 22.500 18.500 20 L20 5 M10 10 V17 M14 10 V17" /></Line></IconButton>
            <IconButton $w={60} $color="#7a7a7a" aria-label="Favorite"><Line size={26} w={1.6}><path d="M12 22 L3 13 Q0 9 2 5 Q6 -1 12 5 Q18 -1 22 5 Q24 9 21 13z" /></Line></IconButton>
            <IconButton $w={60} aria-label="Info"><Line size={25} w={1.5}><circle cx="12" cy="12" r="10.800" /><path d="M12 10.500 V17" /><circle cx="12" cy="7" r=".7" fill="#fff" /></Line></IconButton>
            <IconButton $w={60} aria-label="Print"><Line size={26} w={1.6}><path d="M6 6 V5 Q6 2 9 2 H15 Q18 2 18 5 V6 M6 18 H4 Q1.500 18 1.500 15.500 V10 Q1.500 6.500 5 6.500 H19 Q22.500 6.500 22.500 10 V15.500 Q22.500 18 20 18 H18" /><rect x="6" y="13" width="12" height="9.500" rx="2" /></Line></IconButton>
            <IconButton $w={60} aria-label="OneDrive">
              <svg width="32" height="26" viewBox="0 0 32 26"><path d="M7 23 Q0 22 0 16 Q1 11 7 11 Q9 3 17 3 Q24 4 25 11 Q32 12 32 18 Q31 23 26 23z" fill="#0a78d4" /><path d="M7 23 Q1 22 1 17 L14 12 L29 22 Q28 23 26 23z" fill="#28a8ea" /><path d="M7 1 L31 24" stroke="#202020" strokeWidth="2" /><path d="M5 1 L29 25" stroke="#a8a8a8" strokeWidth="2" /></svg>
            </IconButton>
            <IconButton $w={60} aria-label="Clipchamp">
              <svg width="25" height="26" viewBox="0 0 25 26"><path d="M0 4 L22 0 Q24 0 24 2 V6 L0 9z" fill="#7a3fd0" /><path d="M0 8 H25 V23 Q25 26 22 26 H2 Q0 26 0 24z" fill="#8a62f0" /><path d="M0 8 H18 V14 H0z" fill="#e8a2f8" /><path d="M0 14 H9 V20 H0z" fill="#d88af4" /><path d="M9 14 H25 V20 H9z" fill="#a678f4" /><path d="M12 20 H25 V23 Q25 26 22 26 H12z" fill="#5838e8" /></svg>
            </IconButton>
            <IconButton $w={60} aria-label="More"><svg width="24" height="6" viewBox="0 0 24 6" fill="#fff"><circle cx="3" cy="3" r="2.500" /><circle cx="12" cy="3" r="2.500" /><circle cx="21" cy="3" r="2.500" /></svg></IconButton>
          </Commands>
          <WindowControls>
            <IconButton $w={69} $h={44} aria-label="Minimize"><Line size={16} w={2}><path d="M1 12 H23" /></Line></IconButton>
            <IconButton $w={69} $h={44} aria-label="Maximize"><Line size={16} w={2}><rect x="1" y="1" width="22" height="22" rx="3" /></Line></IconButton>
            <IconButton $w={69} $h={44} aria-label="Close"><CloseX s={18} w={1.8} /></IconButton>
          </WindowControls>
        </PhotosBar>
        <Stage><BrowserShot /></Stage>
        <PhotosFooter>
          <IconButton $w={60} aria-label="Filmstrip"><Line size={26} w={1.6}><rect x="1" y="3" width="22" height="18" rx="3.500" /><path d="M1 16.500 H23" /><path d="M4 19 H20" strokeDasharray="1.500 2.500" strokeWidth="2.500" strokeLinecap="butt" /></Line></IconButton>
          <FooterRule />
          <ZoomLevel>62%</ZoomLevel>
          <IconButton $w={60} $color="#7a7a7a" aria-label="Zoom out"><Line size={24} w={1.6}><circle cx="10" cy="10" r="8.500" /><path d="M16.500 16.500 L23 23 M6 10 H14" /></Line></IconButton>
          <IconButton $w={60} aria-label="Zoom in"><Line size={24} w={1.7}><circle cx="10" cy="10" r="8.500" /><path d="M16.500 16.500 L23 23 M6 10 H14 M10 6 V14" /></Line></IconButton>
          <IconButton $w={60} $color="#7a7a7a" aria-label="Fit to window"><Line size={26} w={1.6}><rect x="1" y="3" width="22" height="18" rx="2.500" /><path d="M5 10 V7 H8 M16 7 H19 V10 M19 14 V17 H16 M8 17 H5 V14" /></Line></IconButton>
          <IconButton $w={60} aria-label="Actual size"><Line size={26} w={1.6}><rect x="1" y="3" width="22" height="18" rx="3" /><path d="M5 9 L7 7.500 V16 M16 9 L18 7.500 V16" /><circle cx="12" cy="10" r=".6" fill="#fff" /><circle cx="12" cy="15" r=".6" fill="#fff" /></Line></IconButton>
          <FooterRule />
          <IconButton $w={60} aria-label="Full screen"><Line size={24} w={1.7}><path d="M2 22 L22 2 M12 1.500 H22.500 V12 M1.500 12 V22.500 H12" /></Line></IconButton>
        </PhotosFooter>
      </PhotosWindow>
    </>
  );
}

const Fact = ({ label, children }) => <Row><dt>{label}</dt><dd>{children}</dd></Row>;

function Properties() {
  return (
    <>
      <DialogShadow />
      <Dialog>
        <DialogBar>
          <FileIcon w={18} h={22} />
          <DialogTitle>Screenshot 2024-05-24 124028 Properties</DialogTitle>
          <IconButton $w={49} aria-label="Close"><CloseX s={18} w={2} /></IconButton>
        </DialogBar>
        <DialogTabs>
          <DialogTab $active>General</DialogTab>
          <DialogTab>Security</DialogTab>
          <DialogTab>Details</DialogTab>
          <DialogTab>Previous Versions</DialogTab>
        </DialogTabs>
        <Panel>
          <FileHead>
            <FileIcon w={34} h={43} />
            <NameInput aria-label="File name" defaultValue="Screenshot 2024-05-24 124028" />
          </FileHead>
          <Group>
            <Fact label="Type of file:">PNG File (.png)<Caret /></Fact>
            <Fact label="Opens with:">Photos<PushButton $w={156} $end>Change...</PushButton></Fact>
          </Group>
          <Group>
            <Fact label="Location:">C:\Users\Administrator\Desktop</Fact>
            <Fact label="Size:">341 KB (349,342 bytes)</Fact>
            <Fact label="Size on disk:">344 KB (352,256 bytes)</Fact>
          </Group>
          <Group>
            <Fact label="Created:">Friday, May 24, 2024, 12:40:51 PM</Fact>
            <Fact label="Modified:">Friday, May 24, 2024, 12:40:28 PM</Fact>
            <Fact label="Accessed:">Today, May 24, 2024, 12:40:51 PM</Fact>
          </Group>
          <Group>
            <Fact label="Attributes:">
              <Check><input type="checkbox" />Read-only</Check>
              <Check><input type="checkbox" />Hidden</Check>
              <PushButton $end>Advanced...</PushButton>
            </Fact>
          </Group>
        </Panel>
        <DialogFooter>
          <PushButton $primary>OK</PushButton>
          <PushButton>Cancel</PushButton>
          <PushButton disabled>Apply</PushButton>
        </DialogFooter>
      </Dialog>
    </>
  );
}

export default function App() {
  return (
    <>
      <GlobalStyle />
      <Desktop>
        <Workspace>
          <Wallpaper />
          <DesktopItem $x={24} $y={17}><DesktopFolder kind="user" /></DesktopItem>
          <DesktopItem $x={136} $y={17}><DesktopFolder kind="chrome" /></DesktopItem>
          <DesktopItem $x={248} $y={17}><DesktopFolder kind="code" /></DesktopItem>
          <DesktopItem $x={356} $y={7}><Art s={72}><VsMark /></Art></DesktopItem>
          <DesktopItem $x={6} $y={86}>A</DesktopItem>
          <DesktopItem $x={12} $y={566}>I</DesktopItem>
          <DesktopItem $x={2} $y={726}>Co</DesktopItem>
          <Photos />
          <Properties />
        </Workspace>
        <Taskbar apps={outerApps} time="12:41 PM" />
      </Desktop>
    </>
  );
}
